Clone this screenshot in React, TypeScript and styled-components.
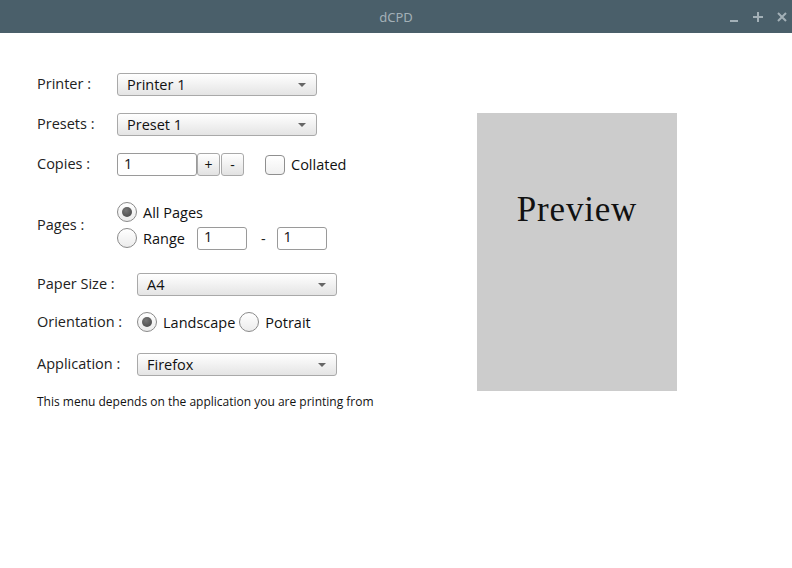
import React, { useState } from "react";
import styled, { createGlobalStyle } from "styled-components";

const GlobalStyle = createGlobalStyle`
    html, body {
        margin: 0;
        padding: 0;
        background: #ffffff;
    }
    body {
        font-family: "Open Sans", "Noto Sans", sans-serif;
        color: #222;
    }
`;

const Window = styled.div`
    width: 792px;
    height: 568px;
    display: flex;
    flex-direction: column;
    background: #ffffff;
    overflow: hidden;
`;

const TitleBar = styled.div`
    height: 33px;
    flex-shrink: 0;
    background: #4a5f6a;
    display: flex;
    align-items: center;
    justify-content: center;
    position: relative;
`;

const TitleText = styled.span`
    color: #a3b0b7;
    font-size: 13px;
    font-family: "Noto Sans", "Open Sans", sans-serif;
`;

const WindowControls = styled.div`
    position: absolute;
    right: 3px;
    top: 0;
    height: 33px;
    display: flex;
    align-items: center;
    gap: 10px;
`;

const ControlButton = styled.span`
    width: 14px;
    height: 14px;
    display: flex;
    align-items: center;
    justify-content: center;
`;

const Body = styled.div`
    flex: 1;
    display: flex;
    padding: 40px 0 0 37px;
`;

const Form = styled.div`
    width: 440px;
    display: flex;
    flex-direction: column;
`;

const Row = styled.div<{ $top: number }>`
    display: flex;
    align-items: center;
    margin-top: ${(p) => p.$top}px;
`;

const Label = styled.label<{ $width: number }>`
    width: ${(p) => p.$width}px;
    flex-shrink: 0;
    font-size: 14.5px;
    color: #222;
    margin-top: -2px;
`;

const Select = styled.div<{ $width?: number }>`
    width: ${(p) => p.$width ?? 200}px;
    height: 23px;
    box-sizing: border-box;
    border: 1px solid #a9a9a9;
    border-radius: 3px;
    background: linear-gradient(#ffffff, #e4e4e4);
    display: flex;
    align-items: center;
    justify-content: space-between;
    padding: 0 10px 0 9px;
    font-size: 14.5px;
    color: #111;
`;

const Caret = styled.span`
    width: 0;
    height: 0;
    border-left: 4px solid transparent;
    border-right: 4px solid transparent;
    border-top: 4px solid #666;
    margin-top: 1px;
`;

const TextInput = styled.input<{ $width: number }>`
    width: ${(p) => p.$width}px;
    height: 23px;
    box-sizing: border-box;
    border: 1px solid #9a9a9a;
    border-radius: 3px;
    padding: 0 6px 3px;
    font-family: "Open Sans", "Noto Sans", sans-serif;
    font-size: 14.5px;
    color: #111;
    background: #fff;
    outline: none;
    margin: 0;
`;

const StepButton = styled.button`
    width: 23px;
    height: 23px;
    box-sizing: border-box;
    border: 1px solid #a9a9a9;
    border-radius: 3px;
    background: linear-gradient(#ffffff, #e2e2e2);
    font-family: "Open Sans", "Noto Sans", sans-serif;
    font-size: 14px;
    color: #111;
    padding: 0;
    margin: 0 0 0 1px;
    display: flex;
    align-items: center;
    justify-content: center;
`;

const Checkbox = styled.span`
    width: 20px;
    height: 20px;
    box-sizing: border-box;
    border: 1px solid #8f8f8f;
    border-radius: 4px;
    background: linear-gradient(#ffffff, #f0f0f0);
    margin-left: 21px;
`;

const OptionText = styled.span<{ $gap?: number }>`
    font-size: 14.5px;
    color: #111;
    margin-left: ${(p) => p.$gap ?? 6}px;
`;

const Radio = styled.span<{ $checked?: boolean; $gap?: number }>`
    width: 20px;
    height: 20px;
    box-sizing: border-box;
    border: 1px solid #8a8a8a;
    border-radius: 50%;
    background: linear-gradient(#ffffff, #ececec);
    display: flex;
    align-items: center;
    justify-content: center;
    flex-shrink: 0;
    margin-left: ${(p) => p.$gap ?? 0}px;
    &::after {
        content: "";
        display: ${(p) => (p.$checked ? "block" : "none")};
        width: 10px;
        height: 10px;
        border-radius: 50%;
        background: radial-gradient(circle at 40% 35%, #777, #444);
    }
`;

const RadioGroup = styled.div`
    display: flex;
    flex-direction: column;
    gap: 6px;
`;

const RadioLine = styled.div`
    display: flex;
    align-items: center;
    height: 20px;
`;

const RangeInputs = styled.div`
    display: flex;
    align-items: center;
    margin-left: 12px;
`;

const Dash = styled.span`
    font-size: 14.5px;
    margin: 0 11px 0 14px;
`;

const Note = styled.p`
    margin: 17px 0 0;
    font-size: 12px;
    color: #111;
`;

const PreviewBox = styled.div`
    width: 200px;
    height: 278px;
    margin-top: 40px;
    background: #cccccc;
    display: flex;
    justify-content: center;
`;

const PreviewText = styled.span`
    font-family: "Liberation Serif", "Times New Roman", serif;
    font-size: 35px;
    letter-spacing: 0.8px;
    color: #111;
    margin-top: 79px;
    line-height: 1;
`;

export default function App() {
    const [copies, setCopies] = useState(1);

    return (
        <Window>
            <GlobalStyle />
            <TitleBar>
                <TitleText>dCPD</TitleText>
                <WindowControls>
                    <ControlButton>
                        <svg width="10" height="14" viewBox="0 0 10 14">
                            <rect x="1" y="10" width="8" height="2" fill="#a3b0b7" />
                        </svg>
                    </ControlButton>
                    <ControlButton>
                        <svg width="10" height="10" viewBox="0 0 10 10">
                            <rect x="0" y="4" width="10" height="2" fill="#a3b0b7" />
                            <rect x="4" y="0" width="2" height="10" fill="#a3b0b7" />
                        </svg>
                    </ControlButton>
                    <ControlButton>
                        <svg width="10" height="10" viewBox="0 0 10 10">
                            <path d="M1 1 L9 9 M9 1 L1 9" stroke="#a3b0b7" strokeWidth="2" />
                        </svg>
                    </ControlButton>
                </WindowControls>
            </TitleBar>
            <Body>
                <Form>
                    <Row $top={0}>
                        <Label $width={80}>Printer :</Label>
                        <Select>
                            Printer 1
                            <Caret />
                        </Select>
                    </Row>
                    <Row $top={17}>
                        <Label $width={80}>Presets :</Label>
                        <Select>
                            Preset 1
                            <Caret />
                        </Select>
                    </Row>
                    <Row $top={17}>
                        <Label $width={80}>Copies :</Label>
                        <TextInput
                            $width={80}
                            value={copies}
                            onChange={(e) => setCopies(Number(e.target.value) || 1)}
                        />
                        <StepButton style={{ marginLeft: 0 }} onClick={() => setCopies(copies + 1)}>
                            +
                        </StepButton>
                        <StepButton onClick={() => setCopies(Math.max(1, copies - 1))}>-</StepButton>
                        <Checkbox />
                        <OptionText>Collated</OptionText>
                    </Row>
                    <Row $top={26}>
                        <Label $width={80}>Pages :</Label>
                        <RadioGroup>
                            <RadioLine>
                                <Radio $checked />
                                <OptionText>All Pages</OptionText>
                            </RadioLine>
                            <RadioLine>
                                <Radio />
                                <OptionText>Range</OptionText>
                                <RangeInputs>
                                    <TextInput $width={50} defaultValue="1" />
                                    <Dash>-</Dash>
                                    <TextInput $width={50} defaultValue="1" />
                                </RangeInputs>
                            </RadioLine>
                        </RadioGroup>
                    </Row>
                    <Row $top={25}>
                        <Label $width={100}>Paper Size :</Label>
                        <Select>
                            A4
                            <Caret />
                        </Select>
                    </Row>
                    <Row $top={16}>
                        <Label $width={100}>Orientation :</Label>
                        <Radio $checked />
                        <OptionText>Landscape</OptionText>
                        <Radio $gap={4} />
                        <OptionText>Potrait</OptionText>
                    </Row>
                    <Row $top={21}>
                        <Label $width={100}>Application :</Label>
                        <Select>
                            Firefox
                            <Caret />
                        </Select>
                    </Row>
                    <Note>This menu depends on the application you are printing from</Note>
                </Form>
                <PreviewBox>
                    <PreviewText>Preview</PreviewText>
                </PreviewBox>
            </Body>
        </Window>
    );
}
